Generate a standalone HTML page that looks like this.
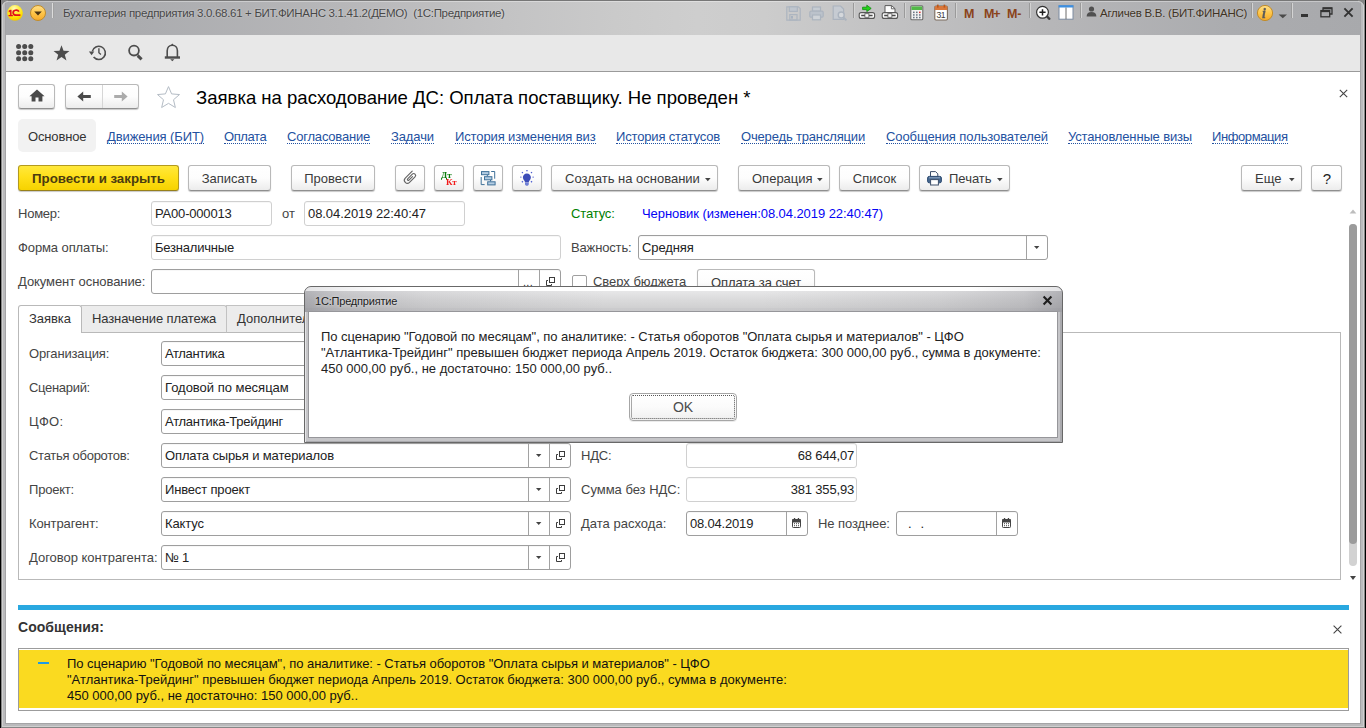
<!DOCTYPE html>
<html lang="ru">
<head>
<meta charset="utf-8">
<title>Бухгалтерия предприятия</title>
<style>
*{box-sizing:border-box;margin:0;padding:0}
html,body{width:1366px;height:728px;overflow:hidden;background:#fff}
body{font-family:"Liberation Sans",Arial,sans-serif;font-size:13px;color:#333;position:relative}
.abs{position:absolute}
.t{position:absolute;white-space:pre;line-height:16px;height:16px}
/* window frame */
#titlebar{left:0;top:0;width:1366px;height:35px;background:linear-gradient(#777 0,#777 1px,rgba(255,255,255,.0) 1px),linear-gradient(90deg,#a8a9ac 0,#abacaf 10%,#b7b7b9 25%,#c3c3c4 37%,#cacaca 45%,#cecece 51%,#cccccc 56%,#c2c2c3 65%,#b6b6b8 77%,#abacaf 90%,#a8a9ac 100%)}
#toolbar{left:6px;top:35px;width:1354px;height:36px;background:#e8e8e8}
#tbline{left:6px;top:71px;width:1354px;height:1px;background:#9a9a9a}
.ring{top:0;border-style:solid;pointer-events:none}
/* buttons */
.btn{position:absolute;height:26px;border:1px solid #b9b9b9;border-bottom-color:#8f8f8f;border-radius:3px;background:linear-gradient(#ffffff 0,#fdfdfd 50%,#ececec 100%);box-shadow:0 1px 1px rgba(0,0,0,.22);font-size:13px;line-height:24px;padding-top:1px;color:#3a3a3a;white-space:pre;text-align:center}
.btn.y{background:linear-gradient(#ffe83c 0,#ffe01a 45%,#f6d200 100%);border-color:#b39a1e;border-bottom-color:#97801a;color:#4b3c10;font-weight:bold;font-size:13.3px;letter-spacing:-.02px}
.arr{display:inline-block;width:0;height:0;border-left:2.75px solid transparent;border-right:2.75px solid transparent;border-top:3px solid #444;vertical-align:middle;margin-left:9px;position:relative;top:0}
.btn.la{text-align:left;padding-left:13px}
svg.ra{position:absolute;right:6.2px;top:12px}
/* inputs */
  .inp{position:absolute;height:25px;border:1px solid #d0d0d0;border-radius:3px;background:#fff;font-size:13px;line-height:24px;padding-left:3px;white-space:pre;color:#222;box-shadow:inset 0 1px 0 rgba(0,0,0,.03)}
.inp.d{border-color:#9e9e9e}
.inp.r{text-align:right;padding-right:2px}
.seg{position:absolute;top:0;bottom:0;border-left:1px solid #c4c4c4}
.inp.d .seg{border-left-color:#a2a2a2}
.lnk{position:absolute;white-space:pre;line-height:16px;color:#23519f;border-bottom:1px dotted #23519f;height:15px;top:129px;letter-spacing:-.1px}
.lbl{position:absolute;white-space:pre;line-height:16px;color:#444}
</style>
</head>
<body>
<!-- ===== window chrome ===== -->
<div id="titlebar" class="abs"></div>
<div id="toolbar" class="abs"></div>
<div id="tbline" class="abs"></div>
<!-- CHROME-ICONS -->
<div class="abs" style="left:8px;top:1px;width:1350px;height:1px;background:rgba(255,255,255,.35)"></div>
<!-- 1C logo -->
<svg class="abs" style="left:6px;top:4px" width="18" height="18" viewBox="0 0 18 18"><defs><radialGradient id="g1c" cx="45%" cy="22%" r="80%"><stop offset="0" stop-color="#fffbc0"/><stop offset=".35" stop-color="#fff04a"/><stop offset=".75" stop-color="#ffe000"/><stop offset="1" stop-color="#efc000"/></radialGradient></defs><circle cx="9" cy="8.9" r="7.8" fill="url(#g1c)"/><text x="2.2" y="11.9" font-family="Liberation Sans,sans-serif" font-size="8.4" fill="#e2101a" stroke="#e2101a" stroke-width=".7">1</text><path d="M12.9 7.7A3 2.5 0 1 0 10.2 11.2H14.4" fill="none" stroke="#e2101a" stroke-width="1.7"/></svg>
<!-- dropdown round -->
<svg class="abs" style="left:29px;top:4px" width="18" height="18" viewBox="0 0 18 18"><defs><linearGradient id="gdd" x1="0" y1="0" x2="0" y2="1"><stop offset="0" stop-color="#ffe08a"/><stop offset=".5" stop-color="#ffc649"/><stop offset="1" stop-color="#f5a92b"/></linearGradient></defs><circle cx="9" cy="9" r="7.5" fill="url(#gdd)" stroke="#c18c2a" stroke-width="1"/><path d="M5.2 7.6h7.6L9 11.6z" fill="#4a3414"/></svg>
<div class="abs" style="left:52px;top:3px;width:1px;height:15px;background:#dcdcdc"></div>
<div class="abs" style="left:53px;top:3px;width:1px;height:15px;background:#a2a2a2"></div>
<div class="t" style="left:63px;top:5px;font-size:11.5px;color:#474747;letter-spacing:-0.31px;text-shadow:0 0 2px rgba(255,255,255,.55)">Бухгалтерия предприятия 3.0.68.61 + БИТ.ФИНАНС 3.1.41.2(ДЕМО)  (1С:Предприятие)</div>
<!-- toolbar icons -->
<svg class="abs" style="left:16px;top:44px" width="18" height="18" viewBox="0 0 18 18" fill="#4d4d4d"><circle cx="2.6" cy="2.6" r="2.5"/><circle cx="8.7" cy="2.6" r="2.5"/><circle cx="14.8" cy="2.6" r="2.5"/><circle cx="2.6" cy="8.7" r="2.5"/><circle cx="8.7" cy="8.7" r="2.5"/><circle cx="14.8" cy="8.7" r="2.5"/><circle cx="2.6" cy="14.8" r="2.5"/><circle cx="8.7" cy="14.8" r="2.5"/><circle cx="14.8" cy="14.8" r="2.5"/></svg>
<svg class="abs" style="left:53px;top:45px" width="17" height="17" viewBox="0 0 17 17"><path d="M8.5 0.3l2.05 5.55 5.9.2-4.65 3.65 1.65 5.7L8.5 12.1 3.55 15.4 5.2 9.7.55 6.05l5.9-.2z" fill="#4d4d4d"/></svg>
<svg class="abs" style="left:80px;top:36px" width="120" height="36" viewBox="80 36 120 36" fill="none" stroke="#4d4d4d"><path d="M92.3 51.4A6.6 6.6 0 1 1 93.6 57" stroke-width="1.6"/><path d="M98.9 48.2v4.6l2 1.700000000000001" stroke-width="1.4"/><path d="M88.9 51.5h5.4l-2.7 3.700000000000001z" fill="#4d4d4d" stroke="none"/><circle cx="134" cy="50.6" r="4.9" stroke-width="1.8"/><path d="M137.3 54.2l1 1" stroke-width="1.4"/><path d="M137.7 55.6l3.9 3.7" stroke-width="3"/><path d="M167.2 57.2v-6.4c0-3.3 2.1-5.5 5.1-5.5s5.1 2.2 5.1 5.5v6.4" stroke-width="1.6"/><path d="M164.8 57.5h15.2" stroke-width="2.4"/><path d="M170.8 45.2l1.500000000000001-1.600000000000001 1.500000000000001 1.600000000000001z" fill="#4d4d4d" stroke="none"/><path d="M170.2 59.2h4.2l-2.1 2z" fill="#4d4d4d" stroke="none"/></svg>
<!-- right titlebar icons -->
<svg class="abs" opacity=".6" style="left:786px;top:6px" width="15" height="15" viewBox="0 0 15 15" fill="none" stroke="#9aa8ba" stroke-width="1.2"><path d="M.8.8h11.6l1.8 1.8v11.6H.8z"/><rect x="3.3" y=".8" width="8" height="4.6" fill="#b9c4d2"/><rect x="3.8" y="8.6" width="7.2" height="5.4"/><rect x="5" y="10" width="2" height="2.6" fill="#93a3b8" stroke="none"/></svg>
<svg class="abs" opacity=".6" style="left:809px;top:6px" width="15" height="15" viewBox="0 0 15 15" fill="none" stroke="#9aa8ba" stroke-width="1.2"><rect x="3.5" y="1" width="8" height="4.2" fill="#c6cfda"/><rect x=".8" y="5.2" width="13.4" height="6" rx="1.2" fill="#b4bfcd"/><rect x="3.5" y="9" width="8" height="4.8" fill="#d4dbe3"/></svg>
<svg class="abs" opacity=".6" style="left:832px;top:5px" width="16" height="17" viewBox="0 0 16 17" fill="none" stroke="#9aa8ba" stroke-width="1.2"><path d="M1.2 1h7.4l3 3v10.4H1.2z" fill="#c6cfda"/><circle cx="9.2" cy="10" r="3" fill="#dfe4ea" stroke-width="1.4"/><path d="M11.4 12.4l3 3" stroke-width="2"/></svg>
<div class="abs" style="left:853px;top:3px;width:1px;height:15px;background:#9a9a9a"></div><div class="abs" style="left:854px;top:3px;width:1px;height:15px;background:#d3d3d3"></div>
<svg class="abs" style="left:858px;top:4px" width="18" height="16" viewBox="0 0 18 16"><path d="M4.6 3.2h4.2V1.2l4.4 3.2-4.4 3.2V5.6H4.6z" fill="#22d51a" stroke="#0f8a0c" stroke-width=".8"/><rect x="1.2" y="8.6" width="15.4" height="5.8" rx="2" fill="#fbfbfb" stroke="#575757" stroke-width="1.1"/><path d="M3.2 11.5h4.3M10.3 11.5h4.3" stroke="#4a4a4a" stroke-width="1.7"/><rect x="6.9" y="9.7" width="4" height="3.6" fill="#fbfbfb" stroke="#575757" stroke-width=".8"/></svg>
<svg class="abs" style="left:881px;top:4px" width="18" height="16" viewBox="0 0 18 16"><path d="M4 9V1.6h6.6L14 4.6V9z" fill="#fdfdfd" stroke="#5a5a5a" stroke-width="1"/><path d="M10.4 1.6v3.2H14" fill="none" stroke="#5a5a5a" stroke-width=".9"/><rect x="1.2" y="8.6" width="15.4" height="5.8" rx="2" fill="#fbfbfb" stroke="#575757" stroke-width="1.1"/><path d="M3.2 11.5h4.3M10.3 11.5h4.3" stroke="#4a4a4a" stroke-width="1.7"/><rect x="6.9" y="9.7" width="4" height="3.6" fill="#fbfbfb" stroke="#575757" stroke-width=".8"/></svg>
<div class="abs" style="left:904px;top:3px;width:1px;height:15px;background:#9a9a9a"></div><div class="abs" style="left:905px;top:3px;width:1px;height:15px;background:#d3d3d3"></div>
<svg class="abs" style="left:910px;top:5px" width="14" height="16" viewBox="0 0 14 16"><rect x=".8" y=".8" width="12" height="14" rx="1" fill="#f2f2f2" stroke="#6c6c6c" stroke-width="1.1"/><rect x="1.4" y="1.4" width="10.8" height="3.6" fill="#52b848"/><g fill="#6a7684"><rect x="3" y="6.6" width="1.6" height="1.5"/><rect x="6" y="6.6" width="1.6" height="1.5"/><rect x="3" y="9.2" width="1.6" height="1.5"/><rect x="6" y="9.2" width="1.6" height="1.5"/><rect x="3" y="11.8" width="1.6" height="1.5"/><rect x="6" y="11.8" width="1.6" height="1.5"/><rect x="9" y="9.2" width="1.6" height="1.5"/><rect x="9" y="11.8" width="1.6" height="1.5"/></g><rect x="9" y="6.6" width="1.6" height="1.5" fill="#d33"/></svg>
<svg class="abs" style="left:934px;top:4px" width="15" height="17" viewBox="0 0 15 17"><rect x=".8" y="2" width="12.6" height="14" rx="1.2" fill="#fff" stroke="#7a6a5c" stroke-width="1.1"/><path d="M.8 3.2a1.2 1.2 0 0 1 1.2-1.2h10.200000000000001a1.2 1.2 0 0 1 1.2 1.2V6H.8z" fill="#d9773a"/><rect x="3" y=".6" width="1.6" height="3" fill="#b8561c"/><rect x="9.6" y=".6" width="1.6" height="3" fill="#b8561c"/><text x="2.4" y="14.2" font-family="Liberation Sans,sans-serif" font-size="8.6" fill="#3b3b3b" letter-spacing="-.3">31</text></svg>
<div class="abs" style="left:955px;top:3px;width:1px;height:15px;background:#9a9a9a"></div><div class="abs" style="left:956px;top:3px;width:1px;height:15px;background:#d3d3d3"></div>
<div class="t" style="left:964px;top:6px;font-size:12.5px;font-weight:bold;color:#8a431a">M</div>
<div class="t" style="left:984px;top:6px;font-size:12.5px;font-weight:bold;color:#8a431a;letter-spacing:-1.2px">M+</div>
<div class="t" style="left:1007px;top:6px;font-size:12.5px;font-weight:bold;color:#8a431a;letter-spacing:-.2px">M-</div>
<div class="abs" style="left:1029px;top:3px;width:1px;height:15px;background:#9a9a9a"></div><div class="abs" style="left:1030px;top:3px;width:1px;height:15px;background:#d3d3d3"></div>
<svg class="abs" style="left:1034px;top:4px" width="18" height="18" viewBox="0 0 18 18"><circle cx="8.5" cy="8.3" r="5.9" fill="#fff" stroke="#333" stroke-width="1.2"/><path d="M5.4 8.3h6.2M8.5 5.2v6.2" stroke="#1e1e1e" stroke-width="1.5"/><path d="M13.2 12.700000000000001l2.2 2.1" stroke="#3c3c3c" stroke-width="2.3" stroke-linecap="round"/></svg>
<svg class="abs" style="left:1058px;top:5px" width="16" height="15" viewBox="0 0 16 15"><rect x="1" y=".8" width="14" height="13.4" fill="#fff" stroke="#7d8ca2" stroke-width="1"/><rect x=".6" y=".2" width="14.8" height="2.3" fill="#3d8fe0"/><path d="M8 2.5v11.7" stroke="#6b6b6b" stroke-width="1"/></svg>
<div class="abs" style="left:1080px;top:3px;width:1px;height:15px;background:#9a9a9a"></div><div class="abs" style="left:1081px;top:3px;width:1px;height:15px;background:#d3d3d3"></div>
<svg class="abs" style="left:1086px;top:6px" width="11" height="11" viewBox="0 0 11 11"><circle cx="5.5" cy="3" r="2.6" fill="#505050"/><path d="M.6 10.4c0-3 2-4.4 4.9-4.4s4.900000000000001 1.4 4.900000000000001 4.4z" fill="#505050"/></svg>
<div class="t" style="left:1100px;top:5px;font-size:11.5px;color:#3f3324;letter-spacing:-0.25px;text-shadow:0 0 2px rgba(255,255,255,.4)">Агличев В.В. (БИТ.ФИНАНС)</div>
<div class="abs" style="left:1251px;top:3px;width:1px;height:15px;background:#9a9a9a"></div><div class="abs" style="left:1252px;top:3px;width:1px;height:15px;background:#d3d3d3"></div>
<svg class="abs" style="left:1256px;top:4px" width="18" height="18" viewBox="0 0 18 18"><circle cx="9" cy="9" r="7.6" fill="url(#gdd)" stroke="#c18c2a" stroke-width="1"/><text x="6" y="13.6" font-family="Liberation Serif,serif" font-weight="bold" font-style="italic" font-size="14" fill="#5b5b5b" stroke="#5b5b5b" stroke-width=".3" style="will-change:transform">i</text></svg>
<svg class="abs" style="left:1278px;top:14px" width="10" height="5" viewBox="0 0 10 5"><path d="M.6.4h8.4L4.8 4.2z" fill="#4a4a4a"/></svg>
<div class="abs" style="left:1291px;top:3px;width:1px;height:15px;background:#9a9a9a"></div><div class="abs" style="left:1292px;top:3px;width:1px;height:15px;background:#d3d3d3"></div>
<div class="abs" style="left:1301px;top:14px;width:7px;height:3px;background:#333"></div>
<svg class="abs" style="left:1320px;top:7px" width="13" height="11" viewBox="0 0 13 11" fill="none" stroke="#333"><path d="M3 3V1h9v6h-2" stroke-width="1.3"/><path d="M3 1.4h9" stroke-width="1.8"/><rect x=".9" y="3.6" width="8.8" height="6.2" stroke-width="1.3"/><path d="M.9 4.2h8.8" stroke-width="1.9"/></svg>
<svg class="abs" style="left:1343px;top:7px" width="11" height="11" viewBox="0 0 11 11"><path d="M1.4 1.4l8.2 8.2M9.6 1.4L1.4 9.6" stroke="#333" stroke-width="1.9"/></svg>

<!-- ===== page content ===== -->
<!-- CONTENT -->
<!-- nav buttons -->
<div class="btn" style="left:18px;top:84px;width:37px;height:25px"><svg style="position:absolute;left:10px;top:4px" width="16" height="13" viewBox="0 0 16 13"><path d="M8 .6L.4 7.2h2.2v5.4h3.9V8.6h3v4h3.9V7.2h2.2z" fill="#4a4a4a"/></svg></div>
<div class="btn" style="left:65px;top:84px;width:74px;height:25px"><div style="position:absolute;left:36px;top:0;bottom:0;width:1px;background:#d6d6d6"></div><svg style="position:absolute;left:11px;top:6px" width="14" height="11" viewBox="0 0 14 11"><path d="M13.8 4H6.2V.6L.4 5.5l5.8 4.9V7h7.6z" fill="#4a4a4a"/></svg><svg style="position:absolute;left:48px;top:6px" width="14" height="11" viewBox="0 0 14 11"><path d="M.2 4H7.800000000000001V.6l5.8 4.9-5.8 4.9V7H.2z" fill="#ababab"/></svg></div>
<svg class="abs" style="left:156px;top:85px" width="25" height="24" viewBox="0 0 25 24"><path d="M12.5 1.6l3.1 7.3 7.9.65-6 5.2 1.85 7.75-6.85-4.15-6.85 4.15L7.5 14.75l-6-5.2 7.9-.65z" fill="#fff" stroke="#b4bcc5" stroke-width="1" stroke-linejoin="miter"/></svg>
<div class="t" style="left:196px;top:87px;font-size:18.55px;line-height:22px;height:22px;color:#000">Заявка на расходование ДС: Оплата поставщику. Не проведен *</div>
<svg class="abs" style="left:1339px;top:89px" width="9" height="9" viewBox="0 0 9 9"><path d="M.8.8l7.4 7.4M8.2.8L.8 8.2" stroke="#444" stroke-width="1.1"/></svg>
<!-- section links -->
<div class="abs" style="left:18px;top:119px;width:78px;height:33px;background:#f2f2f2;border-radius:5px"></div>
<div class="t" style="left:28px;top:129px;color:#333;letter-spacing:-0.147px">Основное</div>
<div class="lnk" style="left:107px;letter-spacing:-0.105px">Движения (БИТ)</div>
<div class="lnk" style="left:224px;letter-spacing:-0.4px">Оплата</div>
<div class="lnk" style="left:287px;letter-spacing:-0.2px">Согласование</div>
<div class="lnk" style="left:391px;letter-spacing:-0.11px">Задачи</div>
<div class="lnk" style="left:455px;letter-spacing:-0.12px">История изменения виз</div>
<div class="lnk" style="left:616px;letter-spacing:-0.157px">История статусов</div>
<div class="lnk" style="left:741px;letter-spacing:-0.164px">Очередь трансляции</div>
<div class="lnk" style="left:886px;letter-spacing:-0.085px">Сообщения пользователей</div>
<div class="lnk" style="left:1068px;letter-spacing:-0.155px">Установленные визы</div>
<div class="lnk" style="left:1212px;letter-spacing:-0.4px">Информация</div>
<!-- command bar -->
<div class="btn y" style="left:18px;top:165px;width:161px">Провести и закрыть</div>
<div class="btn" style="left:188px;top:165px;width:83px">Записать</div>
<div class="btn" style="left:291px;top:165px;width:84px">Провести</div>
<div class="btn" style="left:395px;top:165px;width:30px"><svg style="position:absolute;left:0;top:0" width="28" height="24" viewBox="0 0 28 24" fill="none" stroke="#646464" stroke-width="1.15" stroke-linecap="round"><g transform="translate(16.2 5.2) rotate(45)"><path d="M0 0V9.8A3 3 0 0 0 6 9.8V2A1.9 1.9 0 0 0 2.2 2V8.6A.9.9 0 0 0 4 8.6V3.6"/></g></svg></div>
<div class="btn" style="left:434px;top:165px;width:30px"><svg style="position:absolute;left:0;top:0;will-change:transform" width="28" height="24" viewBox="0 0 28 24" font-family="Liberation Serif,serif" font-weight="bold"><text x="6" y="12" font-size="9" fill="#087a08">Дт</text><text x="11" y="19" font-size="9" fill="#f21a1a">Кт</text></svg></div>
<div class="btn" style="left:473px;top:165px;width:30px"><svg style="position:absolute;left:0;top:0" width="28" height="24" viewBox="0 0 28 24" fill="none" stroke="#3f7199" stroke-width="1"><path d="M17.2 5.5h3.5v7.2M7.2 11v7.6h3.4M13.3 8.7v1.6M16.5 13.8v1.6"/><rect x="7.5" y="5.6" width="7.4" height="3.1" fill="#b4cde3"/><rect x="10.5" y="10.7" width="7.4" height="3.1" fill="#b4cde3"/><rect x="13.7" y="15.8" width="7.4" height="3.1" fill="#b4cde3"/></svg></div>
<div class="btn" style="left:512px;top:165px;width:30px"><svg style="position:absolute;left:0;top:0" width="28" height="24" viewBox="0 0 28 24"><path d="M13.9 7.4c-2.4 0-4 1.8-4 3.9 0 1.5.8 2.5 1.500000000000001 3.4.4.5.6 1 .6 1.700000000000001h3.8c0-.7.2-1.2.6-1.700000000000001.7-.9 1.5-1.9 1.5-3.4 0-2.1-1.6-3.9-4-3.9z" fill="#3d4db7"/><path d="M12 16.8h3.8v1.500000000000001c0 .9-.8 1.500000000000001-1.9 1.500000000000001s-1.9-.6-1.9-1.500000000000001z" fill="#6f7fd6"/><g fill="#4b5bd0"><rect x="13.3" y="4" width="1.3" height="1.3"/><rect x="8.8" y="5.9" width="1.3" height="1.3" transform="rotate(45 9.4 6.5)"/><rect x="17.9" y="5.9" width="1.3" height="1.3" transform="rotate(45 18.5 6.5)"/><rect x="7" y="10.6" width="1.600000000000001" height="1.1" opacity=".7"/><rect x="19.4" y="10.6" width="1.600000000000001" height="1.1" opacity=".7"/><rect x="8.8" y="15.1" width="1.3" height="1.3" transform="rotate(45 9.4 15.7)"/><rect x="17.9" y="15.1" width="1.3" height="1.3" transform="rotate(45 18.5 15.7)"/></g></svg></div>
<div class="btn la" style="left:551px;top:165px;width:167px">Создать на основании<svg class="ra" width="6" height="4" viewBox="0 0 6 4"><path d="M0 0h5.6L2.8 3.3z" fill="#444"/></svg></div>
<div class="btn la" style="left:738px;top:165px;width:92px">Операция<svg class="ra" width="6" height="4" viewBox="0 0 6 4"><path d="M0 0h5.6L2.8 3.3z" fill="#444"/></svg></div>
<div class="btn" style="left:839px;top:165px;width:71px">Список</div>
<div class="btn" style="left:919px;top:165px;width:91px;text-align:left;padding-left:29px"><svg style="position:absolute;left:7px;top:5px" width="15" height="15" viewBox="0 0 15 15"><path d="M3.5.6h5l2.3 2.2v3H3.5z" fill="#fff" stroke="#3d4f6b" stroke-width="1"/><rect x=".6" y="5.4" width="13.8" height="6.4" rx="1.600000000000001" fill="#45678f" stroke="#2f4d73" stroke-width="1"/><path d="M2 6.8h11" stroke="#9fb6d0" stroke-width=".8"/><rect x="3.6" y="8.6" width="7.8" height="5.4" fill="#fff" stroke="#3d4f6b" stroke-width="1"/></svg>Печать<svg class="ra" width="6" height="4" viewBox="0 0 6 4"><path d="M0 0h5.6L2.8 3.3z" fill="#444"/></svg></div>
<div class="btn la" style="left:1241px;top:165px;width:61px">Еще<svg class="ra" width="6" height="4" viewBox="0 0 6 4"><path d="M0 0h5.6L2.8 3.3z" fill="#444"/></svg></div>
<div class="btn" style="left:1311px;top:165px;width:31px;font-size:15px;color:#222;padding-left:1px">?</div>
<!-- header fields -->
<div class="lbl" style="left:18px;top:206px;letter-spacing:-0.24px">Номер:</div>
<div class="inp" style="left:151px;top:201px;width:121px;letter-spacing:-0.196px">РА00-000013</div>
<div class="lbl" style="left:282px;top:206px">от</div>
<div class="inp" style="left:304px;top:201px;width:161px;letter-spacing:-0.067px">08.04.2019 22:40:47</div>
<div class="lbl" style="left:571px;top:206px;color:#008000;letter-spacing:-0.146px">Статус:</div>
<div class="lbl" style="left:642px;top:206px;color:#0404f4;letter-spacing:-0.067px">Черновик (изменен:08.04.2019 22:40:47)</div>
<div class="lbl" style="left:18px;top:240px;letter-spacing:-0.103px">Форма оплаты:</div>
<div class="inp" style="left:151px;top:235px;width:410px;letter-spacing:-0.202px">Безналичные</div>
<div class="lbl" style="left:571px;top:240px;letter-spacing:-0.151px">Важность:</div>
<div class="inp d" style="left:638px;top:235px;width:410px;letter-spacing:-0.101px">Средняя<div class="seg" style="left:387px;width:21px"><svg style="position:absolute;left:6.8px;top:10px" width="6" height="3" viewBox="0 0 6 3"><path d="M0 0h5.4L2.7 3z" fill="#444"/></svg></div></div>
<div class="lbl" style="left:18px;top:274px;letter-spacing:-0.074px">Документ основание:</div>
<div class="inp d" style="left:151px;top:269px;width:410px"><div class="seg" style="left:366px;width:21px"><span style="position:absolute;left:4px;top:5px;font-size:11px;line-height:14px;color:#333;letter-spacing:.3px">...</span></div><div class="seg" style="left:387px;width:21px"><svg style="position:absolute;left:6px;top:7px" width="9" height="9" viewBox="0 0 9 9" fill="none" stroke="#3c3c3c" stroke-width="1"><rect x="3.5" y=".5" width="5" height="5"/><path d="M2 3.5H.5v5h5V7"/></svg></div></div>
<div class="abs" style="left:572px;top:275px;width:15px;height:15px;border:1px solid #a0a0a0;border-radius:2px;background:#fff"></div>
<div class="lbl" style="left:593px;top:274px;letter-spacing:-0.024px">Сверх бюджета</div>
<div class="btn" style="left:697px;top:269px;width:118px;letter-spacing:-0.065px">Оплата за счет</div>
<!-- tabs -->
<div class="abs" style="left:18px;top:332px;width:1323px;height:248px;border:1px solid #b9b9b9;background:#fff"></div>
<div class="abs" style="left:81px;top:305px;width:146px;height:28px;border:1px solid #c2c2c2;border-left:none;border-bottom-color:#b9b9b9;background:#ececec;border-radius:0 3px 0 0"></div>
<div class="abs" style="left:226px;top:305px;width:160px;height:28px;border:1px solid #c2c2c2;border-bottom-color:#b9b9b9;background:#ececec;border-radius:0 3px 0 0"></div>
<div class="abs" style="left:18px;top:305px;width:64px;height:28px;border:1px solid #b9b9b9;border-bottom:none;background:#fff;border-radius:3px 3px 0 0"></div>
<div class="t" style="left:29px;top:311px;color:#333;letter-spacing:-0.072px">Заявка</div>
<div class="t" style="left:92px;top:311px;color:#333;letter-spacing:-.12px">Назначение платежа</div>
<div class="t" style="left:237px;top:311px;color:#333">Дополнительно</div>
<!-- tab fields -->
<div class="lbl" style="left:29px;top:346px;letter-spacing:-0.153px">Организация:</div>
<div class="inp d" style="left:161px;top:341px;width:410px;letter-spacing:-0.352px">Атлантика<div class="seg" style="left:366px;width:21px"><svg style="position:absolute;left:6.8px;top:10px" width="6" height="3" viewBox="0 0 6 3"><path d="M0 0h5.4L2.7 3z" fill="#444"/></svg></div><div class="seg" style="left:387px;width:21px"><svg style="position:absolute;left:6px;top:7px" width="9" height="9" viewBox="0 0 9 9" fill="none" stroke="#3c3c3c" stroke-width="1"><rect x="3.5" y=".5" width="5" height="5"/><path d="M2 3.5H.5v5h5V7"/></svg></div></div>
<div class="lbl" style="left:29px;top:380px;letter-spacing:-0.311px">Сценарий:</div>
<div class="inp d" style="left:161px;top:375px;width:410px;letter-spacing:-0.017px">Годовой по месяцам<div class="seg" style="left:366px;width:21px"><svg style="position:absolute;left:6.8px;top:10px" width="6" height="3" viewBox="0 0 6 3"><path d="M0 0h5.4L2.7 3z" fill="#444"/></svg></div><div class="seg" style="left:387px;width:21px"><svg style="position:absolute;left:6px;top:7px" width="9" height="9" viewBox="0 0 9 9" fill="none" stroke="#3c3c3c" stroke-width="1"><rect x="3.5" y=".5" width="5" height="5"/><path d="M2 3.5H.5v5h5V7"/></svg></div></div>
<div class="lbl" style="left:29px;top:414px;letter-spacing:0.291px">ЦФО:</div>
<div class="inp d" style="left:161px;top:409px;width:410px;letter-spacing:-0.256px">Атлантика-Трейдинг<div class="seg" style="left:366px;width:21px"><svg style="position:absolute;left:6.8px;top:10px" width="6" height="3" viewBox="0 0 6 3"><path d="M0 0h5.4L2.7 3z" fill="#444"/></svg></div><div class="seg" style="left:387px;width:21px"><svg style="position:absolute;left:6px;top:7px" width="9" height="9" viewBox="0 0 9 9" fill="none" stroke="#3c3c3c" stroke-width="1"><rect x="3.5" y=".5" width="5" height="5"/><path d="M2 3.5H.5v5h5V7"/></svg></div></div>
<div class="lbl" style="left:29px;top:448px;letter-spacing:-0.279px">Статья оборотов:</div>
<div class="inp d" style="left:161px;top:443px;width:410px;letter-spacing:-0.129px">Оплата сырья и материалов<div class="seg" style="left:366px;width:21px"><svg style="position:absolute;left:6.8px;top:10px" width="6" height="3" viewBox="0 0 6 3"><path d="M0 0h5.4L2.7 3z" fill="#444"/></svg></div><div class="seg" style="left:387px;width:21px"><svg style="position:absolute;left:6px;top:7px" width="9" height="9" viewBox="0 0 9 9" fill="none" stroke="#3c3c3c" stroke-width="1"><rect x="3.5" y=".5" width="5" height="5"/><path d="M2 3.5H.5v5h5V7"/></svg></div></div>
<div class="lbl" style="left:29px;top:482px;letter-spacing:-0.205px">Проект:</div>
<div class="inp d" style="left:161px;top:477px;width:410px;letter-spacing:-0.162px">Инвест проект<div class="seg" style="left:366px;width:21px"><svg style="position:absolute;left:6.8px;top:10px" width="6" height="3" viewBox="0 0 6 3"><path d="M0 0h5.4L2.7 3z" fill="#444"/></svg></div><div class="seg" style="left:387px;width:21px"><svg style="position:absolute;left:6px;top:7px" width="9" height="9" viewBox="0 0 9 9" fill="none" stroke="#3c3c3c" stroke-width="1"><rect x="3.5" y=".5" width="5" height="5"/><path d="M2 3.5H.5v5h5V7"/></svg></div></div>
<div class="lbl" style="left:29px;top:516px;letter-spacing:-0.121px">Контрагент:</div>
<div class="inp d" style="left:161px;top:511px;width:410px;letter-spacing:-0.099px">Кактус<div class="seg" style="left:366px;width:21px"><svg style="position:absolute;left:6.8px;top:10px" width="6" height="3" viewBox="0 0 6 3"><path d="M0 0h5.4L2.7 3z" fill="#444"/></svg></div><div class="seg" style="left:387px;width:21px"><svg style="position:absolute;left:6px;top:7px" width="9" height="9" viewBox="0 0 9 9" fill="none" stroke="#3c3c3c" stroke-width="1"><rect x="3.5" y=".5" width="5" height="5"/><path d="M2 3.5H.5v5h5V7"/></svg></div></div>
<div class="lbl" style="left:29px;top:550px;letter-spacing:-0.019px">Договор контрагента:</div>
<div class="inp d" style="left:161px;top:545px;width:410px;letter-spacing:-0.266px">№ 1<div class="seg" style="left:366px;width:21px"><svg style="position:absolute;left:6.8px;top:10px" width="6" height="3" viewBox="0 0 6 3"><path d="M0 0h5.4L2.7 3z" fill="#444"/></svg></div><div class="seg" style="left:387px;width:21px"><svg style="position:absolute;left:6px;top:7px" width="9" height="9" viewBox="0 0 9 9" fill="none" stroke="#3c3c3c" stroke-width="1"><rect x="3.5" y=".5" width="5" height="5"/><path d="M2 3.5H.5v5h5V7"/></svg></div></div>
<div class="lbl" style="left:581px;top:448px;letter-spacing:-0.176px">НДС:</div>
<div class="inp r" style="left:686px;top:443px;width:171px;letter-spacing:-0.183px">68 644,07</div>
<div class="lbl" style="left:581px;top:482px;letter-spacing:-0.012px">Сумма без НДС:</div>
<div class="inp r" style="left:686px;top:477px;width:171px;letter-spacing:-0.178px">381 355,93</div>
<div class="lbl" style="left:581px;top:516px;letter-spacing:0.016px">Дата расхода:</div>
<div class="inp d" style="left:686px;top:511px;width:122px;letter-spacing:-0.188px">08.04.2019<div class="seg" style="left:99px;width:21px"><svg style="position:absolute;left:5px;top:6px" width="9" height="10" viewBox="0 0 9 10"><rect x=".5" y="1.5" width="8" height="8" rx=".8" fill="#fff" stroke="#444" stroke-width="1"/><rect x=".2" y="1.2" width="8.6" height="3.3" fill="#444"/><rect x="1.9" y="0" width="1.3" height="2" fill="#444"/><rect x="5.8" y="0" width="1.3" height="2" fill="#444"/><g fill="#444"><rect x="2" y="5.2" width="1" height="1"/><rect x="4" y="5.2" width="1" height="1"/><rect x="6" y="5.2" width="1" height="1"/><rect x="2" y="7.2" width="1" height="1"/><rect x="4" y="7.2" width="1" height="1"/><rect x="6" y="7.2" width="1" height="1"/></g></svg></div></div>
<div class="lbl" style="left:818px;top:516px;letter-spacing:-0.089px">Не позднее:</div>
<div class="inp d" style="left:896px;top:511px;width:122px;letter-spacing:2.6px;padding-left:11px">. .<div class="seg" style="left:99px;width:21px"><svg style="position:absolute;left:5px;top:6px" width="9" height="10" viewBox="0 0 9 10"><rect x=".5" y="1.5" width="8" height="8" rx=".8" fill="#fff" stroke="#444" stroke-width="1"/><rect x=".2" y="1.2" width="8.6" height="3.3" fill="#444"/><rect x="1.9" y="0" width="1.3" height="2" fill="#444"/><rect x="5.8" y="0" width="1.3" height="2" fill="#444"/><g fill="#444"><rect x="2" y="5.2" width="1" height="1"/><rect x="4" y="5.2" width="1" height="1"/><rect x="6" y="5.2" width="1" height="1"/><rect x="2" y="7.2" width="1" height="1"/><rect x="4" y="7.2" width="1" height="1"/><rect x="6" y="7.2" width="1" height="1"/></g></svg></div></div>
<!-- scrollbar -->
<svg class="abs" style="left:1349px;top:209px" width="8" height="5" viewBox="0 0 8 5"><path d="M4 .6L7.4 4.400000000000001H.6z" fill="#bdbdbd"/></svg>
<div class="abs" style="left:1349px;top:224px;width:8px;height:342px;border-radius:4px;background:#d2d2d2"></div>
<div class="abs" style="left:1349px;top:224px;width:8px;height:320px;border-radius:4px;background:#9b9b9b"></div>
<svg class="abs" style="left:1350px;top:576px" width="6" height="4" viewBox="0 0 6 4"><path d="M0 0h6L3 4z" fill="#444"/></svg>

<!-- ===== messages ===== -->
<!-- MESSAGES -->
<div class="abs" style="left:18px;top:605px;width:1331px;height:5px;background:#29a8e0"></div>
<div class="t" style="left:18px;top:619px;font-weight:bold;font-size:14px;color:#333;letter-spacing:.05px">Сообщения:</div>
<svg class="abs" style="left:1333px;top:625px" width="9" height="9" viewBox="0 0 9 9"><path d="M.6.6l7.8 7.8M8.4.6L.6 8.4" stroke="#444" stroke-width="1.1"/></svg>
<div class="abs" style="left:18px;top:648px;width:1331px;height:63px;border:1px solid #9c9c9c;background:#fff"></div>
<div class="abs" style="left:19px;top:650px;width:1329px;height:58px;background:#fada20"></div>
<div class="abs" style="left:38px;top:662px;width:11px;height:2px;background:#1e9be8"></div>
<div class="abs" style="left:67px;top:656px;width:760px;line-height:16px;color:#111;white-space:pre"><div style="letter-spacing:-.048px">По сценарию "Годовой по месяцам", по аналитике: - Статья оборотов "Оплата сырья и материалов" - ЦФО</div><div style="letter-spacing:-.008px">"Атлантика-Трейдинг" превышен бюджет периода Апрель 2019. Остаток бюджета: 300 000,00 руб., сумма в документе:</div><div>450 000,00 руб., не достаточно: 150 000,00 руб..</div></div>

<!-- ===== dialog ===== -->
<!-- DIALOG -->
<div class="abs" style="left:304px;top:286px;width:759px;height:157px;border:1px solid #686868;border-radius:7px 7px 0 0;background:#c5c5c8;box-shadow:inset 1px 0 0 #e4e4e6,inset -2px -1px 0 #aaaaae;overflow:hidden"><div style="position:absolute;left:0;top:0;width:757px;height:25px;border-radius:6px 6px 0 0;background:linear-gradient(90deg,rgba(60,60,72,.30) 0,rgba(60,60,72,.17) 5%,rgba(60,60,72,.08) 16%,rgba(60,60,72,0) 40%,rgba(60,60,72,0) 60%,rgba(60,60,72,.08) 84%,rgba(60,60,72,.17) 95%,rgba(60,60,72,.30) 100%) 0 4px/100% 21px no-repeat,linear-gradient(90deg,#e4e4e6 0,#fff 12%,#fff 88%,#e4e4e6 100%) 0 0/100% 4px no-repeat,linear-gradient(#fff 0,#fff 3.5px,#e6e6e7 4.5px,#dadadb 13px,#d1d1d2 20.5px,#cbcbcd 21.5px,#c9c9cb 25px)"></div></div>
<div class="abs" style="left:308px;top:311px;width:750px;height:127px;border:1px solid #96969a;background:#fff"></div>
<div class="t" style="left:315px;top:293px;font-size:11px;letter-spacing:-.2px;color:#1c1c1c;text-shadow:0 0 3px rgba(255,255,255,.7)">1С:Предприятие</div>
<svg class="abs" style="left:1042px;top:295px" width="11" height="11" viewBox="0 0 11 11"><path d="M1.6 1.6l7.8 7.8M9.4 1.6L1.6 9.4" stroke="#1e1e1e" stroke-width="2.1"/></svg>
<div class="abs" style="left:321px;top:329px;width:730px;line-height:16px;color:#222;white-space:pre"><div style="letter-spacing:-.048px">По сценарию "Годовой по месяцам", по аналитике: - Статья оборотов "Оплата сырья и материалов" - ЦФО</div><div style="letter-spacing:-.008px">"Атлантика-Трейдинг" превышен бюджет периода Апрель 2019. Остаток бюджета: 300 000,00 руб., сумма в документе:</div><div>450 000,00 руб., не достаточно: 150 000,00 руб..</div></div>
<div class="abs" style="left:629px;top:393px;width:108px;height:28px;border:1px solid #a6a6a6;border-radius:4px;background:linear-gradient(#fff 0,#fbfbfb 50%,#efefef 100%);box-shadow:0 1px 0 rgba(0,0,0,.08)"><div style="position:absolute;left:1px;top:1px;right:1px;bottom:1px;border:1px dotted #555;border-radius:2px"></div><div style="position:absolute;left:0;right:0;top:5px;text-align:center;font-size:14px;line-height:16px;color:#4c4c4c">OK</div></div>

<div class="abs" style="left:0;top:0;width:1px;height:728px;background:#000"></div><div class="abs" style="left:1365px;top:0;width:1px;height:728px;background:#000"></div>
<div class="abs ring" style="left:1px;width:1364px;height:728px;border-width:0 1px 1px;border-color:#868686"></div>
<div class="abs ring" style="left:2px;width:1362px;height:727px;border-width:0 1px 1px;border-color:#cfcfcf"></div>
<div class="abs ring" style="left:3px;width:1360px;height:726px;border-width:0 2px 2px;border-color:#bababc"></div>
<div class="abs ring" style="left:5px;width:1356px;height:724px;border-width:0 1px 1px;border-color:#a4a4a6"></div>
<svg class="abs" style="left:1px;top:0" width="7" height="7" viewBox="0 0 7 7"><path d="M0 0H7V1A6 6 0 0 0 1 7H0z" fill="#858585"/><path d="M1.5 7A5.5 5.5 0 0 1 7 1.5" fill="none" stroke="#d2d2d2" stroke-width="1"/></svg>
<svg class="abs" style="left:1358px;top:0" width="7" height="7" viewBox="0 0 7 7"><path d="M7 0H0V1A6 6 0 0 1 6 7H7z" fill="#858585"/><path d="M5.5 7A5.5 5.5 0 0 0 0 1.5" fill="none" stroke="#d2d2d2" stroke-width="1"/></svg>
</body>
</html>
